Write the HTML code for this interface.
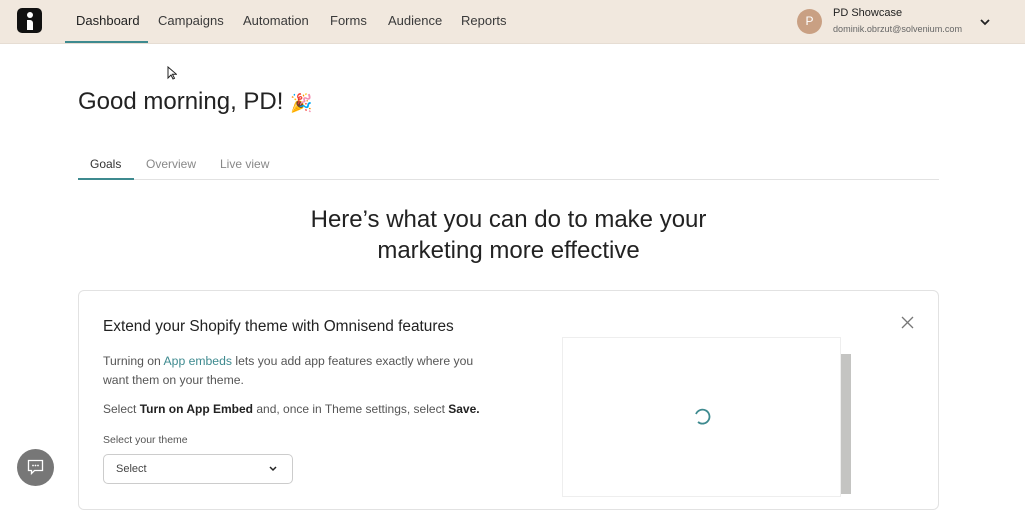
<!DOCTYPE html>
<html><head><style>
*{margin:0;padding:0;box-sizing:border-box}
body{width:1025px;height:486px;overflow:hidden;background:#fff;font-family:"Liberation Sans",sans-serif;color:#2b2b2b;position:relative}
.hdr{position:absolute;left:0;top:0;width:1025px;height:44px;background:#f1e8de;border-bottom:1px solid #e6ddd3}
.logo{position:absolute;left:17px;top:8px;width:25px;height:25px;background:#111;border-radius:5px}
.nav a{position:absolute;top:13px;font-size:13px;color:#3a3a3a;text-decoration:none}
.ul{position:absolute;left:65px;top:41px;width:83px;height:2px;background:#3e8a8f}
.av{position:absolute;left:797px;top:9px;width:25px;height:25px;border-radius:50%;background:#c9a083;color:#fff;font-size:12px;text-align:center;line-height:25px}
.abs{position:absolute}
</style></head><body>
<div class="hdr">
 <div class="logo"><div class="abs" style="left:10px;top:4px;width:6px;height:6px;border-radius:50%;background:#fff"></div><div class="abs" style="left:10px;top:12px;width:6px;height:10px;background:#fff;border-radius:0 3px 0 0"></div></div>
 <div class="nav">
  <a style="left:76px;color:#222">Dashboard</a><a style="left:158px">Campaigns</a><a style="left:243px">Automation</a><a style="left:330px">Forms</a><a style="left:388px">Audience</a><a style="left:461px">Reports</a>
 </div>
 <div class="ul"></div>
 <div class="av">P</div>
 <div class="abs" style="left:833px;top:7px;font-size:11px;color:#222">PD Showcase</div>
 <div class="abs" style="left:833px;top:24px;font-size:9.1px;color:#666">dominik.obrzut@solvenium.com</div>
 <svg class="abs" style="left:980px;top:18px" width="10" height="8"><path d="M1 2l4 4 4-4" stroke="#222" stroke-width="1.8" fill="none"/></svg>
</div>
<div class="abs" style="left:78px;top:88px;font-size:24px;color:#222">Good morning, PD! <span style="font-size:18px">🎉</span></div>
<div class="abs" style="left:90px;top:157px;font-size:12px;color:#333">Goals</div>
<div class="abs" style="left:146px;top:157px;font-size:12px;color:#888">Overview</div>
<div class="abs" style="left:220px;top:157px;font-size:12px;color:#888">Live view</div>
<div class="abs" style="left:78px;top:179px;width:861px;height:1px;background:#e2e2e2"></div>
<div class="abs" style="left:78px;top:178px;width:56px;height:2px;background:#3e8a8f"></div>
<div class="abs" style="left:0;top:204px;width:1017px;text-align:center;font-size:24px;line-height:31px;color:#222">Here’s what you can do to make your<br>marketing more effective</div>
<div class="abs" style="left:78px;top:290px;width:861px;height:220px;border:1px solid #e2e2e2;border-radius:6px"></div>
<div class="abs" style="left:103px;top:318px;font-size:15.4px;color:#222">Extend your Shopify theme with Omnisend features</div>
<div class="abs" style="left:103px;top:352px;font-size:12.2px;line-height:19px;color:#555">Turning on <span style="color:#3e8a8f">App embeds</span> lets you add app features exactly where you<br>want them on your theme.</div>
<div class="abs" style="left:103px;top:402px;font-size:12px;color:#555">Select <b style="color:#222">Turn on App Embed</b> and, once in Theme settings, select <b style="color:#222">Save.</b></div>
<div class="abs" style="left:103px;top:434px;font-size:10.5px;color:#555">Select your theme</div>
<div class="abs" style="left:103px;top:454px;width:190px;height:30px;border:1px solid #ccc;border-radius:5px;font-size:11px;color:#444;padding:8px 12px">Select</div>
<svg class="abs" style="left:269px;top:466px" width="8" height="6"><path d="M1 1l3 3 3-3" stroke="#222" stroke-width="1.5" fill="none"/></svg>
<svg class="abs" style="left:901px;top:316px" width="13" height="13"><path d="M1 1l11 11M12 1L1 12" stroke="#777" stroke-width="1.3"/></svg>
<div class="abs" style="left:562px;top:337px;width:279px;height:160px;border:1px solid #eee"></div>
<div class="abs" style="left:841px;top:354px;width:10px;height:140px;background:#c4c4c2"></div>
<svg class="abs" style="left:692px;top:407px" width="20" height="20"><path d="M4 7A7 7 0 1 1 6 15" stroke="#3e8a8f" stroke-width="1.8" fill="none"/></svg>
<div class="abs" style="left:17px;top:449px;width:37px;height:37px;border-radius:50%;background:#777"></div>
<svg class="abs" style="left:27px;top:459px" width="17" height="16"><path d="M1.5 1.5h14v10h-8l-3 3v-3h-3z" stroke="#fff" stroke-width="1.3" fill="none"/><circle cx="6" cy="6.5" r=".9" fill="#fff"/><circle cx="8.5" cy="6.5" r=".9" fill="#fff"/><circle cx="11" cy="6.5" r=".9" fill="#fff"/></svg>
<svg class="abs" style="left:167px;top:66px" width="10" height="15"><path d="M1 1v11l3-3 2 4 1.5-.7-2-4h4z" fill="#fff" stroke="#222" stroke-width="1"/></svg>
</body></html>
